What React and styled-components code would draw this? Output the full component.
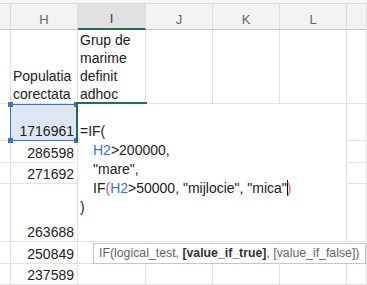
import React from 'react';
import styled, { createGlobalStyle } from 'styled-components';

const GlobalStyle = createGlobalStyle`
  html, body {
    margin: 0;
    padding: 0;
    background: #fff;
  }
  body {
    font-family: 'Liberation Sans', Arial, sans-serif;
  }
  *, *::before, *::after {
    box-sizing: border-box;
  }
`;

const columns = ['', 'H', 'I', 'J', 'K', 'L', ''];

const rows = [
  ['', 'Populatia corectata', 'Grup de marime definit adhoc'],
  ['', '1716961'],
  ['', '286598'],
  ['', '271692'],
  ['', '263688'],
  ['', '250849'],
  ['', '237589'],
];

const isNumber = (v) => /^\d+$/.test(v);

const App = () => {
  return (
    <>
      <GlobalStyle />
      <Sheet>
        <TopEdge />
        <Grid>
          {columns.map((c, i) => (
            <HeaderCell key={'h' + i} $active={c === 'I'}>
              {c}
            </HeaderCell>
          ))}
          {rows.map((row, r) =>
            columns.map((_, c) => {
              const value = row[c] || '';
              return (
                <Cell
                  key={r + '-' + c}
                  $num={isNumber(value)}
                  $ref={r === 1 && c === 1}
                >
                  <span>{value}</span>
                </Cell>
              );
            })
          )}
        </Grid>

        <RefRange>
          <Handle $x="left" $y="top" />
          <Handle $x="right" $y="top" />
          <Handle $x="left" $y="bottom" />
          <Handle $x="right" $y="bottom" />
        </RefRange>

        <ActiveCell />

        <Editor>
          <FormulaLine>=IF(</FormulaLine>
          <FormulaLine $indent>
            <RefText>H2</RefText>&gt;200000,
          </FormulaLine>
          <FormulaLine $indent>"mare",</FormulaLine>
          <FormulaLine $indent>
            IF<Paren $color="#c2509c">(</Paren>
            <RefText>H2</RefText>&gt;50000, "mijlocie", "mica"
            <Caret />
            <Paren $color="#e0605e">)</Paren>
          </FormulaLine>
          <FormulaLine>)</FormulaLine>
        </Editor>

        <Tooltip>
          IF(logical_test, <Strong>[value_if_true]</Strong>, [value_if_false])
        </Tooltip>
      </Sheet>
    </>
  );
};

export default App;

const Sheet = styled.div`
  position: relative;
  width: 367px;
  height: 285px;
  overflow: hidden;
  background: #fff;
`;

const TopEdge = styled.div`
  height: 4px;
  background: #f5f5f5;
  border-bottom: 1px solid #dadada;
`;

const Grid = styled.div`
  display: grid;
  grid-template-columns: 11px 67px 68px 67px 67px 67px 1fr;
  grid-template-rows: 26px 74px 37px 22px 21px 58px 22px 21px;
`;

const HeaderCell = styled.div`
  display: flex;
  align-items: flex-end;
  justify-content: center;
  padding-bottom: 1px;
  background: ${(p) => (p.$active ? '#e1e1e1' : '#f3f3f3')};
  border-right: 1px solid #dedede;
  border-bottom: ${(p) => (p.$active ? '2px solid #217346' : '1px solid #c8c8c8')};
  font-size: 13px;
  line-height: 16px;
  color: ${(p) => (p.$active ? '#3a3a3a' : '#666')};
`;

const Cell = styled.div`
  display: flex;
  align-items: flex-end;
  justify-content: ${(p) => (p.$num ? 'flex-end' : 'flex-start')};
  padding: 0 3px 0 2px;
  background: ${(p) => (p.$ref ? '#dce6f4' : '#fff')};
  border-right: 1px solid #e2e2e2;
  border-bottom: 1px solid #e2e2e2;
  font-size: 14px;
  line-height: 18px;
  color: #222;
  overflow: hidden;
`;

const RefRange = styled.div`
  position: absolute;
  left: 10px;
  top: 104px;
  width: 67px;
  height: 37px;
  border: 1px solid #4472c4;
`;

const Handle = styled.div`
  position: absolute;
  width: 5px;
  height: 5px;
  background: #4472c4;
  ${(p) => (p.$x === 'left' ? 'left: -3px;' : 'right: -3px;')}
  ${(p) => (p.$y === 'top' ? 'top: -3px;' : 'bottom: -3px;')}
`;

const ActiveCell = styled.div`
  position: absolute;
  left: 76px;
  top: 102px;
  width: 71px;
  height: 40px;
  border: 2px solid #217346;
`;

const Editor = styled.div`
  position: absolute;
  left: 78px;
  top: 104px;
  width: 268px;
  height: 137px;
  padding: 18px 0 0 2px;
  background: #fff;
  font-size: 14px;
  line-height: 19px;
  color: #222;
  z-index: 2;
`;

const FormulaLine = styled.div`
  white-space: pre;
  padding-left: ${(p) => (p.$indent ? '13px' : '0')};
`;

const RefText = styled.span`
  color: #4472c4;
`;

const Paren = styled.span`
  color: ${(p) => p.$color};
`;

const Caret = styled.span`
  display: inline-block;
  width: 1px;
  height: 16px;
  margin-right: -1px;
  background: #000;
  vertical-align: -3px;
`;

const Tooltip = styled.div`
  position: absolute;
  left: 93px;
  top: 243px;
  width: 273px;
  height: 21px;
  padding-left: 5px;
  border: 1px solid #c6c6c6;
  background: #fff;
  font-size: 12.3px;
  line-height: 19px;
  color: #666;
  white-space: nowrap;
  z-index: 3;
`;

const Strong = styled.span`
  font-weight: 700;
  color: #333;
`;
